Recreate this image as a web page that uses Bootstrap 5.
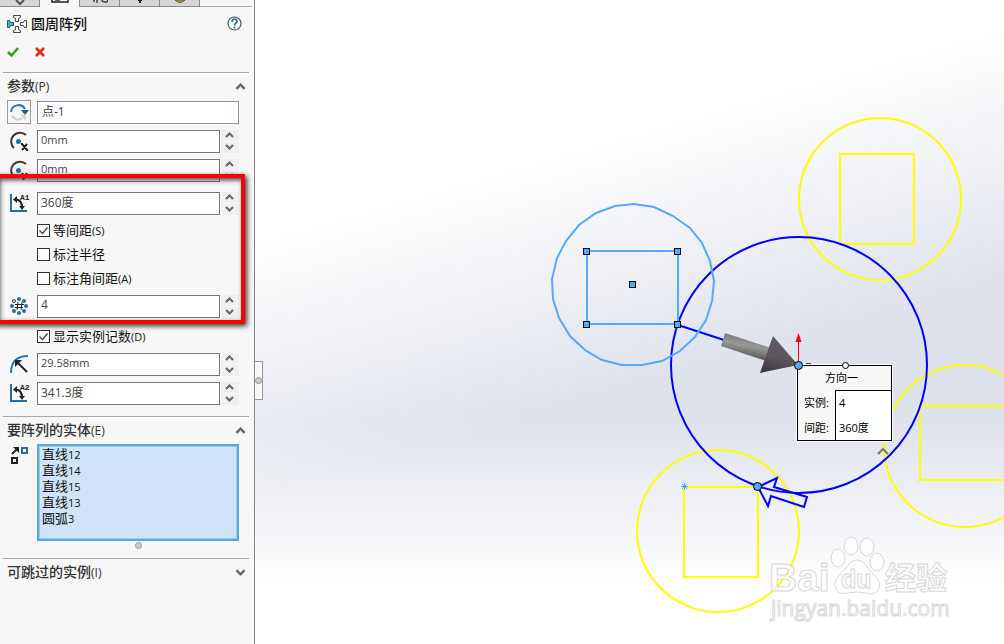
<!DOCTYPE html>
<html lang="zh-CN">
<head>
<meta charset="utf-8">
<meta name="viewport" content="width=device-width, initial-scale=1">
<title>圆周阵列</title>
<link rel="stylesheet" href="https://cdn.jsdelivr.net/npm/bootstrap@5.3.0/dist/css/bootstrap.min.css">
<style>
body{font-family:"Open Sans","Noto Sans CJK SC",sans-serif;font-size:13px;line-height:16px;color:#1b1b1b;background:#fff}
button{padding:0;border:0;background:none;display:flex;align-items:center;justify-content:center}
svg{display:block;fill:none}
.app{min-height:100vh}
.panel{flex:0 0 255px;background:#f7f7f7;border-right:1px solid #888}
.tabstrip{height:7px;padding-right:2px}
.tabstrip button{width:40px;background:#d6d6d6;border-right:1px solid #8c8c8c;border-bottom:1px solid #8c8c8c;overflow:hidden;align-items:flex-start}
.tabstrip button.on{background:#f7f7f7;border-bottom:0}
.tabstrip .rest{border-bottom:1px solid #aaa}
.headline{height:33px;padding:0 12px 0 7px}
.headline h1{font-size:14px;line-height:20px;font-weight:500;color:#111}
.confirm{height:23px;padding-left:7px}
.rule{height:1px;background:#a8a8a8;margin:0 5px 0 3px}
.rule.top{margin-top:9px}
.sec{width:100%;height:27px;padding:0 8px 0 7px;justify-content:space-between;color:#333;font-size:14px;font-weight:500}
.sec span span{font-size:12px;font-weight:400}
.tick span,.picked span{font-size:11px}
.line{height:24px;margin:0 15px 0 7px;display:flex;align-items:center}
.line+.line{margin-top:5px}
.line .ico{width:24px;height:24px;margin-right:6px;display:flex;align-items:center;justify-content:center;flex:none}
.line .pick{border:1px solid #999;background:#f7f7f7}
.val{height:23px;min-width:0;flex:1;border:1px solid #767676;border-radius:0;background:#fff;padding:0 3px 3px;font-size:12px;line-height:16px;color:#444}
.val.metric{font-size:11px}
.val.ref{border-color:#8790ad;padding-left:4px}
.spin{width:17px;height:23px;margin-left:2px;flex:none;display:flex;flex-direction:column;gap:1px}
.spin button{flex:1;background:#efefef;padding-right:2px}
.tick{height:24px;margin-left:37px;display:flex;align-items:center;gap:3px;color:#111}
.tick input{appearance:none;width:13px;height:13px;margin:0;border:1px solid #333;background:#fff;flex:none}
.tick input:checked{background:#fff url("data:image/svg+xml,%3Csvg xmlns='http://www.w3.org/2000/svg' viewBox='0 0 11 11'%3E%3Cpath d='M1.5 5.5l3 3 5-6' fill='none' stroke='%23444' stroke-width='1.3'/%3E%3C/svg%3E")}
.params{padding-bottom:11px}
.marked{margin:5px 0 2px;padding:4px 0;position:relative}
.marked .tick:first-of-type{margin-top:3px}
.marked::after{content:"";position:absolute;left:-6px;right:9px;top:-13px;bottom:-2px;border:4px solid #f00;box-shadow:2px 2px 5px #333,inset 2px 2px 5px #444;pointer-events:none}
.picked{flex:1;height:97px;border:2px solid #55aadd;outline:1px solid #9dcbf0;outline-offset:-3px;background:#cfe4f8;padding:0 3px;margin:0;list-style:none;color:#111}
.picked li{height:16px}
.grip{padding:1px 0 9px 22px}
.knob{width:7px;height:7px;border:1px solid #999;border-radius:50%;background:#ccc}
.split{position:absolute;left:-1px;top:361px;width:9px;height:39px;background:#f7f7f7;border:1px solid #999;border-left:0}
.view{background:linear-gradient(180deg,rgba(255,255,255,0) 65%,#fff 91%),linear-gradient(164deg,#fff 28%,#dee2eb 58%)}
.view>svg{position:absolute;width:100%;height:100%}
.callout{position:absolute;left:542px;top:365px;width:95px;height:76px;border:1px solid #000;background:#f7f7f7;font-size:11px;line-height:16px;color:#000;border-collapse:separate;border-spacing:0;outline:1px solid #fff}
.callout th{font-weight:400;padding:0 0 0 6px}
.callout thead th{height:24px;text-align:center;padding:0 6px 0 0}
.callout td{width:56px;background:#fff;border-left:1px solid #000;padding:0 3px}
.callout tbody tr:first-child td{border-top:1px solid #000}
</style>
</head>
<body>
<svg width="0" height="0" class="position-absolute" aria-hidden="true">
  <defs>
    <symbol id="up" viewBox="0 0 9 6"><path d="M1 5l3.500-3.500L8 5" stroke="#666" stroke-width="2" fill="none"/></symbol>
    <symbol id="down" viewBox="0 0 9 6"><path d="M1 1l3.500 3.500L8 1" stroke="#666" stroke-width="2" fill="none"/></symbol>
    <symbol id="arc" viewBox="0 0 20 20"><path d="M5 17A8 8 0 0 1 17 4" stroke="#3a3a3a" stroke-width="2" fill="none"/><circle cx="9.500" cy="10.500" r="2.500" fill="#256d93"/></symbol>
    <symbol id="angle" viewBox="0 0 20 20"><path d="M2 1v17h16" stroke="#276f96" stroke-width="2" fill="none"/><path d="M6 6.500q7 0 7 8" stroke="#222" stroke-width="2" fill="none"/><path d="M8 3v7L4 6.500zM10 13h6l-3 4z" fill="#222"/></symbol>
  </defs>
</svg>
<div class="app d-flex">
<aside class="panel">
  <div class="tabstrip d-flex">
    <button aria-label="特征树"><svg width="12" height="6"><path d="M2 0l4 4 4-4" stroke="#555" stroke-width="2"/></svg></button>
    <button class="on" aria-label="属性"><svg width="18" height="5"><path d="M1 0v2h16V0" stroke="#222" stroke-width="1.500"/><path d="M4 0h5" stroke="#276f96" stroke-width="2"/></svg></button>
    <button aria-label="配置"><svg width="16" height="5"><path d="M2 0v2M5 0v3M10 0q0 2 3 2t3-2" stroke="#444" stroke-width="1.500"/></svg></button>
    <button aria-label="尺寸"><svg width="10" height="5"><path d="M5 0v3M3 0h4" stroke="#222" stroke-width="2"/></svg></button>
    <button aria-label="外观"><svg width="12" height="5"><path d="M1 0q5 5 10 0z" fill="#cba52a" stroke="#555"/></svg></button>
    <div class="rest flex-fill"></div>
  </div>
  <div class="headline d-flex align-items-center">
    <svg width="20" height="20" viewBox="0 0 20 20"><path d="M6.500 1.500h7v2l-2 1v3h-3v-3l-2-1zM6.500 18.500h7v-2l-2-1v-3h-3v3l-2 1zM19.500 6.500v7h-2l-1-2h-3v-3h3l1-2z" stroke="#444" fill="#f5f5f5"/><path d="M.5 6.500h2l1 2h3v3h-3l-1 2h-2z" fill="#5aa7cc" stroke="#1d5877"/></svg>
    <h1 class="mb-0 ms-1 flex-fill">圆周阵列</h1>
    <button aria-label="帮助"><svg width="15" height="15" viewBox="0 0 15 15"><circle cx="7.500" cy="7.500" r="6.500" stroke="#555" fill="#fff" stroke-width="1.200"/><path d="M5 6q0-3 2.500-3T10 5.500q0 1-1.200 1.800T7.500 9.500M7.500 10.500v2" stroke="#276f96" stroke-width="1.700"/></svg></button>
  </div>
  <div class="confirm d-flex align-items-center gap-3">
    <button aria-label="确定"><svg width="12" height="10"><path d="M1 5l3.500 3.500L11 1" stroke="#3a9d23" stroke-width="2.500"/></svg></button>
    <button aria-label="取消"><svg width="10" height="10"><path d="M1 1l8 8M9 1L1 9" stroke="#d92b04" stroke-width="2.500"/></svg></button>
  </div>
  <div class="rule top"></div>
  <section class="params">
    <button class="sec"><span>参数<span>(P)</span></span><svg width="11" height="7"><use href="#up"/></svg></button>
    <div class="line">
      <button class="ico pick" aria-label="反向"><svg width="20" height="20" viewBox="0 0 20 20"><path d="M2 10A7.500 7.500 0 0 1 16 7" stroke="#2a7da8" stroke-width="2"/><path d="M12 8h8l-4 5z" fill="#256080"/><path d="M3 14q5 6 11 2" stroke="#d3d3d3" stroke-width="2"/><path d="M12 12l5 1-1 6z" fill="#d3d3d3"/></svg></button>
      <input class="val ref" aria-label="阵列轴" value="点-1">
    </div>
    <div class="line">
      <span class="ico"><svg width="20" height="20"><use href="#arc"/><path d="M13 13l5 6M18 13l-5 6M12 13h2M17 19h2" stroke="#222" stroke-width="2"/></svg></span>
      <input class="val metric" aria-label="X" value="0mm">
      <span class="spin"><button aria-label="增"><svg width="9" height="6"><use href="#up"/></svg></button><button aria-label="减"><svg width="9" height="6"><use href="#down"/></svg></button></span>
    </div>
    <div class="line">
      <span class="ico"><svg width="20" height="20"><use href="#arc"/><path d="M13 13l3 4M18 13l-4 7" stroke="#222" stroke-width="2"/></svg></span>
      <input class="val metric" aria-label="Y" value="0mm">
      <span class="spin"><button aria-label="增"><svg width="9" height="6"><use href="#up"/></svg></button><button aria-label="减"><svg width="9" height="6"><use href="#down"/></svg></button></span>
    </div>
    <div class="marked">
      <div class="line">
        <span class="ico"><svg width="20" height="20" overflow="visible"><use href="#angle"/><text x="11" y="7" font-size="8" font-weight="700" font-family="Liberation Mono,monospace" fill="#222">A1</text></svg></span>
        <input class="val" aria-label="角度" value="360度">
        <span class="spin"><button aria-label="增"><svg width="9" height="6"><use href="#up"/></svg></button><button aria-label="减"><svg width="9" height="6"><use href="#down"/></svg></button></span>
      </div>
      <label class="tick"><input type="checkbox" checked><div>等间距<span>(S)</span></div></label>
      <label class="tick"><input type="checkbox"><div>标注半径</div></label>
      <label class="tick"><input type="checkbox"><div>标注角间距<span>(A)</span></div></label>
      <div class="line mt-1">
        <span class="ico"><svg width="20" height="20" viewBox="0 0 20 20"><g fill="#276f96"><circle cx="10" cy="3" r="2"/><circle cx="15" cy="5" r="2"/><circle cx="17" cy="10" r="2"/><circle cx="15" cy="15" r="2"/><circle cx="10" cy="17" r="2"/><circle cx="5" cy="15" r="2"/><circle cx="3" cy="10" r="2"/></g><circle cx="5" cy="5" r="1.500" stroke="#333"/><path d="M9 6l-1 8M13 6l-1 8M6 8.500h9M6 11.500h8" stroke="#222"/></svg></span>
        <input class="val" aria-label="实例数" value="4">
        <span class="spin"><button aria-label="增"><svg width="9" height="6"><use href="#up"/></svg></button><button aria-label="减"><svg width="9" height="6"><use href="#down"/></svg></button></span>
      </div>
    </div>
    <label class="tick"><input type="checkbox" checked><div>显示实例记数<span>(D)</span></div></label>
    <div class="line mt-1">
      <span class="ico"><svg width="20" height="20" viewBox="0 0 20 20"><path d="M2 19Q2 2 19 2" stroke="#2a7da8" stroke-width="2"/><path d="M8 8l10 10" stroke="#222" stroke-width="2"/><path d="M6 6h7l-7 7z" fill="#222"/></svg></span>
      <input class="val metric" aria-label="半径" value="29.58mm">
      <span class="spin"><button aria-label="增"><svg width="9" height="6"><use href="#up"/></svg></button><button aria-label="减"><svg width="9" height="6"><use href="#down"/></svg></button></span>
    </div>
    <div class="line">
      <span class="ico"><svg width="20" height="20" overflow="visible"><use href="#angle"/><text x="11" y="7" font-size="8" font-weight="700" font-family="Liberation Mono,monospace" fill="#222">A2</text></svg></span>
      <input class="val" aria-label="弧角度" value="341.3度">
      <span class="spin"><button aria-label="增"><svg width="9" height="6"><use href="#up"/></svg></button><button aria-label="减"><svg width="9" height="6"><use href="#down"/></svg></button></span>
    </div>
  </section>
  <div class="rule"></div>
  <section>
    <button class="sec"><span>要阵列的实体<span>(E)</span></span><svg width="11" height="7"><use href="#up"/></svg></button>
    <div class="line h-auto align-items-start">
      <span class="ico"><svg width="20" height="20" viewBox="0 0 20 20"><path d="M3 8l5-5" stroke="#222" stroke-width="2"/><path d="M4 1h6v6z" fill="#222"/><rect x="13" y="2" width="5" height="5" stroke="#276f96" stroke-width="2"/><rect x="3" y="12" width="5" height="5" stroke="#222" stroke-width="2"/></svg></span>
      <ul class="picked"><li>直线<span>12</span></li><li>直线<span>14</span></li><li>直线<span>15</span></li><li>直线<span>13</span></li><li>圆弧<span>3</span></li></ul>
    </div>
    <div class="grip d-flex justify-content-center"><div class="knob"></div></div>
  </section>
  <div class="rule"></div>
  <button class="sec"><span>可跳过的实例<span>(I)</span></span><svg width="11" height="7"><use href="#down"/></svg></button>
</aside>
<main class="view flex-fill position-relative overflow-hidden">
  <svg aria-label="草图">
    <defs>
      <linearGradient id="rod" x1=".3" y1="0" x2="0" y2="1"><stop stop-color="#777"/><stop offset=".35" stop-color="#999"/><stop offset="1" stop-color="#2c2c2c"/></linearGradient>
      <linearGradient id="cone" x1=".3" y1="0" x2="0" y2="1"><stop stop-color="#625d62"/><stop offset=".5" stop-color="#5c555c"/><stop offset="1" stop-color="#383238"/></linearGradient>
    </defs>
    <g transform="translate(-255 0)" stroke-width="2">
      <g stroke="#ff0">
        <circle cx="880" cy="199" r="81"/><rect x="840" y="154" width="74" height="90"/>
        <circle cx="965" cy="446" r="81"/><rect x="920" y="406" width="90" height="74"/>
        <circle cx="718" cy="531" r="81"/><rect x="684" y="487" width="74" height="90"/>
      </g>
      <circle cx="799" cy="365" r="128" stroke="#00f"/>
      <path d="M678 325l46 15M758 487l19-9-3 9 33 10-3 10-33-11-3 10z" stroke="#00f"/>
      <path d="M634 204l20 3 19 9 17 12 12 15 8 18 4 20-2 20-6 19-11 17-15 14-18 10-20 4h-20l-20-5-17-10-15-14-11-18-6-19-1-20 5-21 9-17 13-16 17-12 19-7z" stroke="#54a9ff"/>
      <rect x="587" y="251" width="91" height="73" stroke="#54a9ff"/>
      <g fill="#54a9ff" stroke="#000" stroke-width="1">
        <rect x="583.500" y="248.500" width="6" height="6"/><rect x="674.500" y="248.500" width="6" height="6"/><rect x="583.500" y="321.500" width="6" height="6"/><rect x="674.500" y="321.500" width="6" height="6"/><rect x="629.500" y="281.500" width="6" height="6"/>
      </g>
      <path d="M725 333l46 15-5 13-45-15z" fill="url(#rod)"/>
      <path d="M773 336l25 29-38 8z" fill="url(#cone)"/>
      <path d="M798.500 363v-22" stroke="red" stroke-width="1"/><path d="M798.500 333l3 9h-6z" fill="red"/>
      <path d="M806 363.500h5" stroke="#c06" stroke-width="1"/>
      <circle cx="757.500" cy="486.500" r="4" fill="#54a9ff" stroke="#000" stroke-width="1"/>
      <path d="M684.500 483v7M681 486.500h7M682 484l5 5M687 484l-5 5" stroke="#54a9ff" stroke-width="1"/>
      <path d="M878 454l5-5 5 5" stroke="#777"/>
      <g fill="#fff" fill-opacity=".6" stroke="#d8d8d8" stroke-width="1" font-family="'Open Sans','Noto Sans CJK SC',sans-serif">
        <text x="769" y="591" font-size="39" font-weight="700" font-family="Liberation Sans,sans-serif">Bai</text>
        <path d="M857 560q6 0 10 7l9 10q6 7 2 13t-11 3q-10-2-20 0-8 2-11-4t2-12l9-10q4-7 10-7z"/>
        <ellipse cx="838" cy="558" rx="7" ry="9"/><ellipse cx="851" cy="546" rx="7" ry="9"/><ellipse cx="867" cy="547" rx="7" ry="9"/><ellipse cx="877" cy="562" rx="7" ry="9"/>
        <text x="841" y="588" font-size="25" font-weight="700" font-family="Liberation Sans,sans-serif">du</text>
        <text x="885" y="589" font-size="31" font-weight="700">经验</text>
        <text x="771" y="616" font-size="21">jingyan.baidu.com</text>
      </g>
    </g>
  </svg>
  <table class="callout">
    <thead><tr><th colspan="2">方向一</th></tr></thead>
    <tbody><tr><th>实例:</th><td>4</td></tr><tr><th>间距:</th><td>360度</td></tr></tbody>
  </table>
  <svg aria-hidden="true"><g transform="translate(-255 0)" stroke="#000"><circle cx="798.500" cy="365.500" r="4" fill="#54a9ff"/><circle cx="845.500" cy="365.500" r="3" fill="#fff"/></g></svg>
  <div class="split d-flex align-items-center justify-content-center"><div class="knob"></div></div>
</main>
</div>
<script src="https://cdn.jsdelivr.net/npm/bootstrap@5.3.0/dist/js/bootstrap.bundle.min.js"></script>
</body>
</html>
